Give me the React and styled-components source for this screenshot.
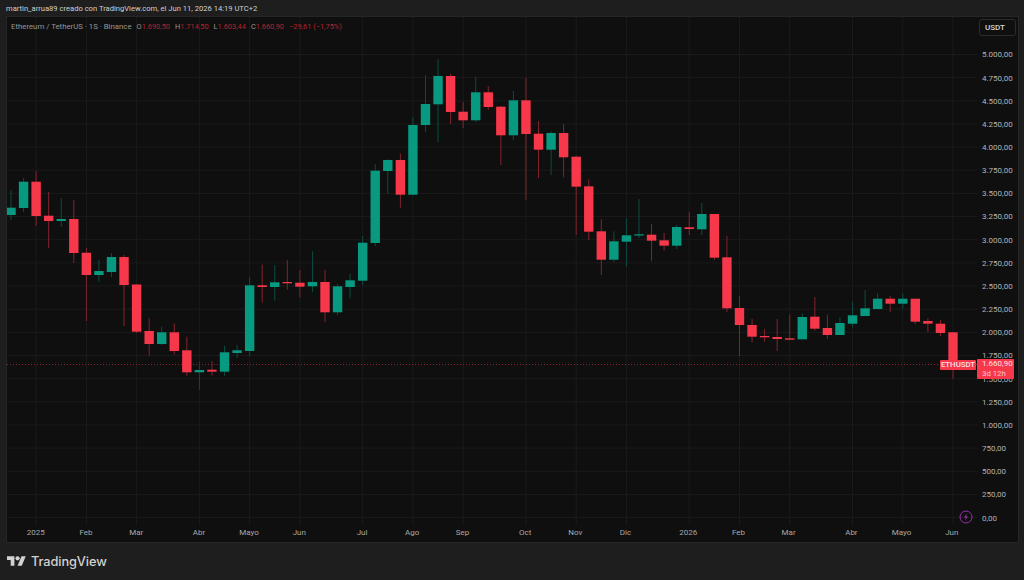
import styled, { createGlobalStyle } from 'styled-components'

const GlobalStyle = createGlobalStyle`
	html, body {
		margin: 0;
		padding: 0;
		background: #1e1e1e;
	}
	* {
		box-sizing: border-box;
	}
`

const Page = styled.div`
	display: flex;
	flex-direction: column;
	width: 1024px;
	height: 580px;
	padding: 0 6px 0 7px;
	background: #1e1e1e;
	font-family: Roboto, "Noto Sans", sans-serif;
`
const Credit = styled.div`
	height: 17px;
	margin-left: -1px;
	font-size: 7.6px;
	line-height: 18px;
	color: #d0d0d0;
	white-space: nowrap;
`
const Panel = styled.div`
	position: relative;
	display: grid;
	grid-template-columns: 970px 1fr;
	grid-template-rows: 508px 1fr;
	height: 525px;
	background: #0f0f0f;
	outline: 1px solid #262626;
`
const Pane = styled.div`
	position: relative;
	grid-column: 1;
	grid-row: 1;
`
const ChartSvg = styled.svg`
	display: block;
`
const Legend = styled.div`
	position: absolute;
	top: 4px;
	left: 4px;
	display: flex;
	gap: 5px;
	font-size: 7.4px;
	line-height: 11px;
	color: #969696;
	white-space: nowrap;
`
const LegendTitle = styled.span`
	font-size: 7.8px;
`
const LegendGroup = styled.span`
	color: ${({ $red }) => ($red ? '#b02532' : '#969696')};
`
const LegendValue = styled.span`
	color: #b02532;
`
const PriceAxis = styled.div`
	grid-column: 2;
	grid-row: 1 / 3;
	display: flex;
	flex-direction: column;
	padding: 2px 3px 0 5px;
`
const CurrencyButton = styled.div`
	width: 37px;
	height: 17px;
	margin-left: -3px;
	margin-bottom: 7.4px;
	padding-left: 5px;
	border: 1px solid #2c2c2c;
	border-radius: 3px;
	font-size: 8px;
	line-height: 15px;
	font-weight: 500;
	color: #d6d6d6;
`
const PriceTick = styled.div`
	flex: 0 0 23.155px;
	font-size: 8px;
	line-height: 23.155px;
	color: #b4b4b4;
	white-space: nowrap;
`
const TimeAxis = styled.div`
	grid-column: 1;
	grid-row: 2;
	display: grid;
	grid-template-columns: repeat(75, 12.56px);
	padding: 0 0 2px 10px;
	align-items: center;
`
const TimeTick = styled.span`
	grid-row: 1;
	grid-column: ${({ $at }) => $at};
	justify-self: center;
	width: max-content;
	font-size: 8px;
	color: #a8a8a8;
`
const SymbolTag = styled.div`
	position: absolute;
	top: 343px;
	left: 933px;
	width: 36px;
	height: 10px;
	border-radius: 1px;
	background: #f7374a;
	font-size: 7.8px;
	font-weight: 500;
	line-height: 10px;
	text-align: center;
	color: #ffe3e5;
`
const PriceTag = styled.div`
	position: absolute;
	top: 342px;
	left: 970px;
	width: 37px;
	height: 20px;
	padding: 0 0 0 5px;
	border-radius: 1px;
	background: #f7374a;
	font-size: 8px;
	line-height: 10px;
	color: #ffe3e5;
`
const Countdown = styled.div`
	font-size: 7.8px;
	color: #ffc4c9;
`
const BoltButton = styled.svg`
	position: absolute;
	top: 493px;
	left: 951.5px;
`
const Brand = styled.div`
	display: flex;
	align-items: center;
	gap: 5px;
	height: 38px;
	color: #d2d2d2;
`
const BrandName = styled.span`
	font-family: Inter, "Noto Sans", sans-serif;
	font-size: 12.8px;
	font-weight: 500;
	letter-spacing: -0.1px;
`

// top, bottom, wick top, wick bottom, in screen pixels
const CANDLES = [
	['g', 207.7, 215, 190, 220], ['g', 181.7, 208, 178, 212], ['r', 181.7, 216, 171, 226], ['r', 215.7, 221, 192, 248],
	['g', 219, 221, 198, 227], ['r', 219, 253, 200, 263], ['r', 252.7, 275, 248, 321], ['g', 271, 275, 260, 282],
	['g', 257, 272, 253, 277], ['r', 257, 285, 255, 326], ['r', 284.5, 331.7, 284.5, 333], ['r', 331, 344, 318.3, 355.7],
	['g', 332.3, 344, 326.7, 345], ['r', 332.3, 351, 323.3, 354.3], ['r', 350.3, 372.3, 336.7, 375.7], ['g', 370, 372.3, 361.7, 390],
	['r', 369.7, 371.7, 361, 375.7], ['g', 352.3, 371.7, 346, 375.7], ['g', 350.3, 353, 345, 358], ['g', 285.3, 351, 276.7, 356],
	['r', 285.3, 287, 264.7, 302.7], ['g', 282.3, 287, 265, 300.7], ['r', 282, 283.3, 260, 289.7], ['r', 282.7, 286.7, 270, 297.7],
	['g', 282, 286.3, 251.3, 292.3], ['r', 282, 312.3, 270, 322], ['g', 286.3, 312.3, 284, 315.3], ['g', 280.3, 287, 274, 298.3],
	['g', 242.7, 280.7, 236, 285], ['g', 170.7, 243, 164, 246], ['g', 160, 171, 159.3, 194], ['r', 160, 194.7, 153.7, 207.7],
	['g', 125, 194.7, 117.3, 195], ['g', 104, 125, 75.3, 132], ['g', 76, 104.3, 59.3, 142.3], ['r', 76, 112, 74, 124],
	['r', 111.7, 120.3, 102, 128.3], ['g', 92.3, 120.3, 76.7, 122], ['r', 92.3, 107, 86, 109.7], ['r', 106.7, 135.3, 106, 165],
	['g', 100.3, 135.3, 91, 140.3], ['r', 100.3, 134, 77.7, 200], ['r', 133.7, 149.7, 121, 178], ['g', 133, 149.7, 131.3, 175],
	['r', 133, 157.3, 124, 177.3], ['r', 156.7, 186.7, 155.7, 235], ['r', 186.3, 231.7, 179.3, 240], ['r', 231.3, 259.7, 219.3, 275],
	['g', 241.3, 259.7, 231.3, 262], ['g', 235.3, 241.7, 218, 266.7], ['g', 234.3, 235, 199, 238], ['r', 234.7, 240.7, 224, 261.3],
	['r', 240.3, 245.7, 233, 250.7], ['g', 227, 245.7, 225, 249], ['r', 227.3, 229, 212, 235], ['g', 214, 229.3, 203, 235],
	['r', 214, 257.7, 214, 260], ['r', 257.3, 308.3, 236, 312], ['r', 308, 325, 296, 356], ['r', 325, 336.7, 319, 342.3],
	['r', 336, 337.3, 329, 341.7], ['r', 337, 339, 319, 351], ['r', 338.3, 339.7, 314.7, 340], ['g', 317, 339.3, 313.3, 339.3],
	['r', 316.7, 328.7, 297, 330.7], ['r', 328, 335, 314.7, 339], ['g', 323, 335, 317.3, 335], ['g', 315.3, 323.7, 302, 327],
	['g', 308.3, 316, 290, 316], ['g', 298.7, 309, 293.3, 309], ['r', 298.7, 303.7, 295.7, 312.3], ['g', 298.7, 303.7, 293.3, 308.7],
	['r', 298.7, 321.7, 298.7, 324], ['r', 321, 323.7, 318.3, 332.3], ['r', 323.7, 333, 320, 336], ['r', 332.3, 365, 332, 379],
]

const MONTHS = [
	['2025', 2], ['Feb', 6], ['Mar', 10], ['Abr', 15], ['Mayo', 19], ['Jun', 23], ['Jul', 28], ['Ago', 32], ['Sep', 36],
	['Oct', 41], ['Nov', 45], ['Dic', 49], ['2026', 54], ['Feb', 58], ['Mar', 62], ['Abr', 67], ['Mayo', 71], ['Jun', 75],
]

const PRICES = [
	'5.000,00', '4.750,00', '4.500,00', '4.250,00', '4.000,00', '3.750,00', '3.500,00', '3.250,00', '3.000,00', '2.750,00', '2.500,00',
	'2.250,00', '2.000,00', '1.750,00', '1.500,00', '1.250,00', '1.000,00', '750,00', '500,00', '250,00', '0,00',
]

const candleX = (i) => 11 + 12.56 * i
const COLORS = {
	g: { body: '#089981', wick: '#0b4d42' },
	r: { body: '#f7374a', wick: '#85232d' },
}

function Chart() {
	return (
		<ChartSvg width="970" height="508" viewBox="7 17 970 508">
			{PRICES.map((p, i) => (
				<line key={p} x1="7" x2="977" y1={54.5 + i * 23.155} y2={54.5 + i * 23.155} stroke="#1b1b1b" />
			))}
			{MONTHS.map(([m, at]) => (
				<line key={m + at} x1={candleX(at)} x2={candleX(at)} y1="17" y2="525" stroke="#1b1b1b" />
			))}
			<line x1="7" x2="977" y1="364.5" y2="364.5" stroke="#8a2530" strokeDasharray="1 2" />
			{CANDLES.map(([dir, top, bottom, wickTop, wickBottom], i) => {
				const x = candleX(i)
				return (
					<g key={i}>
						<line x1={x} x2={x} y1={wickTop} y2={wickBottom} stroke={COLORS[dir].wick} strokeWidth="1" />
						<rect x={x - 4.7} y={top} width="9.4" height={Math.max(bottom - top, 1.2)} fill={COLORS[dir].body} />
					</g>
				)
			})}
		</ChartSvg>
	)
}

function App() {
	return (
		<Page>
			<GlobalStyle />
			<Credit>martin_arrua89 creado con TradingView.com, el Jun 11, 2026 14:19 UTC+2</Credit>
			<Panel>
				<Pane>
					<Chart />
					<Legend>
						<LegendTitle>Ethereum / TetherUS · 1S · Binance</LegendTitle>
						<LegendGroup>O<LegendValue>1.690,50</LegendValue></LegendGroup>
						<LegendGroup>H<LegendValue>1.714,50</LegendValue></LegendGroup>
						<LegendGroup>L<LegendValue>1.603,44</LegendValue></LegendGroup>
						<LegendGroup>C<LegendValue>1.660,90</LegendValue></LegendGroup>
						<LegendGroup $red>−29,61 (−1,75%)</LegendGroup>
					</Legend>
				</Pane>
				<TimeAxis>
					{MONTHS.map(([m, at]) => (
						<TimeTick key={m + at} $at={at}>{m}</TimeTick>
					))}
				</TimeAxis>
				<PriceAxis>
					<CurrencyButton>USDT</CurrencyButton>
					{PRICES.map((p) => (
						<PriceTick key={p}>{p}</PriceTick>
					))}
				</PriceAxis>
				<SymbolTag>ETHUSDT</SymbolTag>
				<PriceTag>
					1.660,90
					<Countdown>3d 12h</Countdown>
				</PriceTag>
				<BoltButton width="14" height="14" viewBox="0 0 14 14" fill="none">
					<circle cx="7" cy="7" r="6" stroke="#9630ab" strokeWidth="1" />
					<path d="M7.9 3.4 4.9 7.6h2l-.8 3 3-4.2h-2z" fill="#9630ab" />
				</BoltButton>
			</Panel>
			<Brand>
				<svg width="19" height="15" viewBox="0 0 36 28" fill="currentColor">
					<path d="M14 22H7V11H0V4h14v18zM28 22h-8l7.5-18h8L28 22z" />
					<circle cx="20" cy="8" r="4" />
				</svg>
				<BrandName>TradingView</BrandName>
			</Brand>
		</Page>
	)
}

export default App
